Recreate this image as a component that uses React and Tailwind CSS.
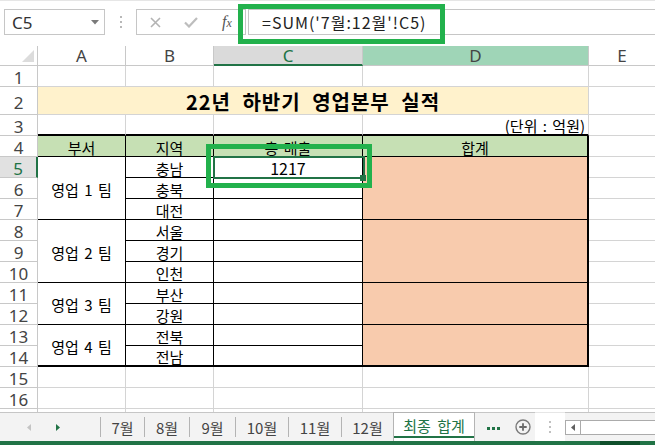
import React from 'react';

const G = "border-r border-b border-[#d4d4d4]";
const GE = "border-b border-[#d4d4d4]";
const RHC = "flex items-center justify-center border-r border-b border-[#c8c8c8] text-[#444] text-[17px] leading-none font-['Noto_Sans',sans-serif]";
const TB = "flex items-center justify-center border-r border-b border-black pt-[2px] [word-spacing:2px]";
const TOP = "border-r border-r-[#d4d4d4] border-b-2 border-b-black";

function RH({ n }) {
  return <div className={RHC}><span className="pt-[3px]">{n}</span></div>;
}

function Blank() {
  return (
    <>
      <div className={G} />
      <div className={G} />
      <div className={G} />
      <div className={G} />
      <div className={GE} />
    </>
  );
}

export default function App() {
  return (
    <div className="relative w-[655px] h-[445px] overflow-hidden bg-white font-['Noto_Sans_CJK_KR',sans-serif] text-black">
      {/* Formula bar */}
      <div className="h-[46px] grid grid-cols-[4px_101px_31px_110px_2px_407px] items-start pt-[8px] border-t border-[#e6e6e6]">
        <div />
        <div className="h-[26px] border border-[#c6c6c6] flex items-center justify-between pl-[7px] pr-[5px]">
          <span className="text-[17px] leading-none text-[#333] font-['Noto_Sans',sans-serif]">C5</span>
          <svg width="8" height="5" viewBox="0 0 8 5"><path d="M0 0H8L4 4.5Z" fill="#7a7a7a" /></svg>
        </div>
        <div className="h-[26px] flex flex-col items-center justify-center gap-[3px]">
          <div className="w-[2px] h-[2px] bg-[#b8b8b8]" />
          <div className="w-[2px] h-[2px] bg-[#b8b8b8]" />
          <div className="w-[2px] h-[2px] bg-[#b8b8b8]" />
        </div>
        <div className="h-[26px] border border-[#c6c6c6] grid grid-cols-[36px_36px_36px] items-center justify-items-center">
          <svg width="11" height="11" viewBox="0 0 11 11"><path d="M1 1L10 10M10 1L1 10" stroke="#b3b3b3" strokeWidth="1.6" /></svg>
          <svg width="14" height="11" viewBox="0 0 14 11"><path d="M1 5.5L5 9.5L13 1" fill="none" stroke="#bdbdbd" strokeWidth="2.2" /></svg>
          <span className="italic font-['Liberation_Serif',serif] text-[#555] text-[16px] leading-none">f<span className="text-[12px]">x</span></span>
        </div>
        <div />
        <div className="h-[26px] border-y border-l border-[#c6c6c6] pl-[13px] flex items-center">
          <span className="text-[16px] leading-none text-[#222] tracking-[1px]">=SUM('7월:12월'!C5)</span>
        </div>
      </div>

      {/* Sheet grid */}
      <div className="grid grid-cols-[38px_88px_88px_149px_226px_66px] grid-rows-[20px_21px_28px_21px_repeat(13,21px)_3px] text-[15px] leading-none">
        {/* header */}
        <div className="relative border-r border-b border-[#c8c8c8]">
          <div className="absolute right-[3px] bottom-[3px] w-0 h-0 border-l-[12px] border-l-transparent border-b-[12px] border-b-[#dcdcdc]" />
        </div>
        <div className={RHC}>A</div>
        <div className={RHC}>B</div>
        <div className="flex items-center justify-center border-r border-r-[#c8c8c8] border-b-2 border-b-[#217346] bg-[#dadada] text-[#217346] text-[17px] leading-none font-['Noto_Sans',sans-serif]">C</div>
        <div className="flex items-center justify-center border-r border-b border-[#c8c8c8] bg-[#9fd5b7] text-[#444] text-[17px] leading-none font-['Noto_Sans',sans-serif]">D</div>
        <div className="flex items-center justify-center border-b border-[#c8c8c8] text-[#444] text-[17px] leading-none font-['Noto_Sans',sans-serif]">E</div>

        {/* row 1 */}
        <RH n="1" />
        <Blank />

        {/* row 2 */}
        <RH n="2" />
        <div className="col-span-4 bg-[#fff2cc] border-r border-b border-[#d4d4d4] flex items-center justify-center pt-[2px]">
          <span className="text-[20px] font-bold tracking-[1px] [word-spacing:6px]">22년 하반기 영업본부 실적</span>
        </div>
        <div className={GE} />

        {/* row 3 */}
        <RH n="3" />
        <div className={TOP} />
        <div className={TOP} />
        <div className={TOP} />
        <div className={TOP + " flex items-center justify-end pr-[3px] pt-[1px] [word-spacing:2px]"}>(단위 : 억원)</div>
        <div className={GE} />

        {/* row 4 */}
        <RH n="4" />
        <div className={TB + " bg-[#c6e0b4]"}>부서</div>
        <div className={TB + " bg-[#c6e0b4]"}>지역</div>
        <div className={TB + " bg-[#c6e0b4]"}>총 매출</div>
        <div className="flex items-center justify-center border-r-2 border-b border-black bg-[#c6e0b4] pt-[2px]">합계</div>
        <div className={GE} />

        {/* row 5 */}
        <div className="flex items-center justify-center border-r-2 border-r-[#217346] border-b border-b-[#c8c8c8] bg-[#e1e1e1] text-[#217346] text-[17px] leading-none font-['Noto_Sans',sans-serif]"><span className="pt-[3px]">5</span></div>
        <div className={TB + " row-span-3"}>영업 1 팀</div>
        <div className={TB}>충남</div>
        <div className={TB + " relative"}>
          <span className="text-[16px]">1217</span>
          <div className="absolute left-[-1px] top-[-1px] w-[152px] h-[23px] border-2 border-[#217346] z-10" />
          <div className="absolute right-[-4px] bottom-[-4px] w-[6px] h-[6px] bg-[#217346] z-20" />
        </div>
        <div className="row-span-3 border-r-2 border-b border-black bg-[#f8cbad]" />
        <div className={GE} />

        {/* row 6 */}
        <RH n="6" />
        <div className={TB}>충북</div>
        <div className={TB} />
        <div className={GE} />

        {/* row 7 */}
        <RH n="7" />
        <div className={TB}>대전</div>
        <div className={TB} />
        <div className={GE} />

        {/* row 8 */}
        <RH n="8" />
        <div className={TB + " row-span-3"}>영업 2 팀</div>
        <div className={TB}>서울</div>
        <div className={TB} />
        <div className="row-span-3 border-r-2 border-b border-black bg-[#f8cbad]" />
        <div className={GE} />

        {/* row 9 */}
        <RH n="9" />
        <div className={TB}>경기</div>
        <div className={TB} />
        <div className={GE} />

        {/* row 10 */}
        <RH n="10" />
        <div className={TB}>인천</div>
        <div className={TB} />
        <div className={GE} />

        {/* row 11 */}
        <RH n="11" />
        <div className={TB + " row-span-2"}>영업 3 팀</div>
        <div className={TB}>부산</div>
        <div className={TB} />
        <div className="row-span-2 border-r-2 border-b border-black bg-[#f8cbad]" />
        <div className={GE} />

        {/* row 12 */}
        <RH n="12" />
        <div className={TB}>강원</div>
        <div className={TB} />
        <div className={GE} />

        {/* row 13 */}
        <RH n="13" />
        <div className="row-span-2 flex items-center justify-center border-r border-b-2 border-black pt-[2px] [word-spacing:2px]">영업 4 팀</div>
        <div className={TB}>전북</div>
        <div className={TB} />
        <div className="row-span-2 border-r-2 border-b-2 border-black bg-[#f8cbad]" />
        <div className={GE} />

        {/* row 14 */}
        <RH n="14" />
        <div className="flex items-center justify-center border-r border-b-2 border-black pt-[1px]">전남</div>
        <div className="border-r border-b-2 border-black" />
        <div className={GE} />

        {/* row 15 */}
        <RH n="15" />
        <Blank />

        {/* row 16 */}
        <RH n="16" />
        <Blank />

        {/* partial row 17 */}
        <div className="border-r border-[#c8c8c8]" />
        <div className="border-r border-[#d4d4d4]" />
        <div className="border-r border-[#d4d4d4]" />
        <div className="border-r border-[#d4d4d4]" />
        <div className="border-r border-[#d4d4d4]" />
        <div />
      </div>

      {/* Tab bar */}
      <div className="h-[29px] flex items-stretch bg-[#f3f3f3] text-[15px] leading-none text-[#444]">
        <div className="shrink-0 w-[100px] flex items-center border-t border-[#c6c6c6]">
          <svg className="ml-[27px]" width="4" height="7" viewBox="0 0 4 7"><path d="M4 0V7L0 3.5Z" fill="#c4c4c4" /></svg>
          <svg className="ml-[25px]" width="4" height="7" viewBox="0 0 4 7"><path d="M0 0V7L4 3.5Z" fill="#217346" /></svg>
        </div>
        <div className="shrink-0 flex items-center border-t border-[#c6c6c6]">
          <div className="w-px h-[20px] bg-[#b4b4b4]" />
          <div className="w-[43px] flex justify-center">7월</div>
          <div className="w-px h-[20px] bg-[#b4b4b4]" />
          <div className="w-[44px] flex justify-center">8월</div>
          <div className="w-px h-[20px] bg-[#b4b4b4]" />
          <div className="w-[45px] flex justify-center">9월</div>
          <div className="w-px h-[20px] bg-[#b4b4b4]" />
          <div className="w-[52px] flex justify-center">10월</div>
          <div className="w-px h-[20px] bg-[#b4b4b4]" />
          <div className="w-[52px] flex justify-center">11월</div>
          <div className="w-px h-[20px] bg-[#b4b4b4]" />
          <div className="w-[51px] flex justify-center">12월</div>
        </div>
        <div className="shrink-0 relative w-[82px] bg-white border-t border-x border-[#b4b4b4] flex items-center justify-center pb-[3px] text-[#217346] [word-spacing:3px]">
          최종 합계
          <div className="absolute left-0 right-0 bottom-[3px] h-[2px] bg-[#217346]" />
        </div>
        <div className="shrink-0 w-[60px] flex items-center border-t border-[#c6c6c6]">
          <div className="ml-[12px] flex gap-[2px] pt-[2px]">
            <div className="w-[3px] h-[3px] bg-[#217346]" />
            <div className="w-[3px] h-[3px] bg-[#217346]" />
            <div className="w-[3px] h-[3px] bg-[#217346]" />
          </div>
          <svg className="ml-[15px]" width="16" height="16" viewBox="0 0 16 16">
            <circle cx="8" cy="8" r="7" fill="none" stroke="#7a7a7a" strokeWidth="1.4" />
            <path d="M8 4.3v7.4M4.3 8h7.4" stroke="#6a6a6a" strokeWidth="1.8" />
          </svg>
        </div>
        <div className="shrink-0 w-[30px] bg-white flex flex-col items-center justify-center gap-[3px] border-t border-[#e6e6e6]">
          <div className="w-[2px] h-[2px] bg-[#c0c0c0]" />
          <div className="w-[2px] h-[2px] bg-[#c0c0c0]" />
          <div className="w-[2px] h-[2px] bg-[#c0c0c0]" />
        </div>
        <div className="flex-1 flex items-center bg-[#f3f3f3] border-t border-[#c6c6c6]">
          <div className="w-full h-[15px] border-y border-l border-[#ababab] bg-white flex">
            <div className="w-[15px] border-r border-[#ababab] flex items-center justify-center">
              <svg width="4" height="7" viewBox="0 0 4 7"><path d="M4 0V7L0 3.5Z" fill="#606060" /></svg>
            </div>
          </div>
        </div>
      </div>

      {/* Status bar strip */}
      <div className="h-[4px] bg-[#217346] flex">
        <div className="ml-[600px] w-[40px] bg-[#0f4f2b]" />
      </div>

      {/* Highlight overlays */}
      <div className="absolute left-[238px] top-[4px] w-[207px] h-[40px] border-[5px] border-[#22b14c]" />
      <div className="absolute left-[206px] top-[144px] w-[166px] h-[44px] border-[5px] border-[#22b14c] z-30" />
    </div>
  );
}
